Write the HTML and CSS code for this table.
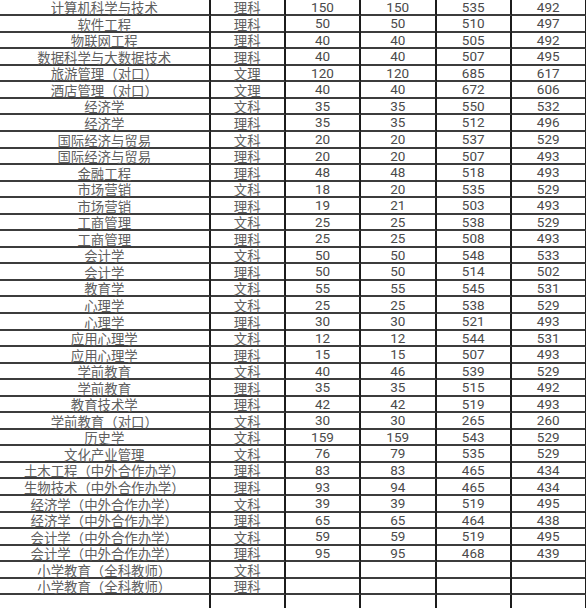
FILE: index.html
```html
<!DOCTYPE html>
<html lang="zh">
<head>
<meta charset="utf-8">
<link rel="stylesheet" href="styles.css">
</head>
<body>
<div class="sheet">
<div class="row"><span class="name">计算机科学与技术</span><span class="type">理科</span><span>150</span><span>150</span><span>535</span><span>492</span></div>
<div class="row"><span class="name">软件工程</span><span class="type">理科</span><span>50</span><span>50</span><span>510</span><span>497</span></div>
<div class="row"><span class="name">物联网工程</span><span class="type">理科</span><span>40</span><span>40</span><span>505</span><span>492</span></div>
<div class="row"><span class="name">数据科学与大数据技术</span><span class="type">理科</span><span>40</span><span>40</span><span>507</span><span>495</span></div>
<div class="row"><span class="name">旅游管理（对口）</span><span class="type">文理</span><span>120</span><span>120</span><span>685</span><span>617</span></div>
<div class="row"><span class="name">酒店管理（对口）</span><span class="type">文理</span><span>40</span><span>40</span><span>672</span><span>606</span></div>
<div class="row"><span class="name">经济学</span><span class="type">文科</span><span>35</span><span>35</span><span>550</span><span>532</span></div>
<div class="row"><span class="name">经济学</span><span class="type">理科</span><span>35</span><span>35</span><span>512</span><span>496</span></div>
<div class="row"><span class="name">国际经济与贸易</span><span class="type">文科</span><span>20</span><span>20</span><span>537</span><span>529</span></div>
<div class="row"><span class="name">国际经济与贸易</span><span class="type">理科</span><span>20</span><span>20</span><span>507</span><span>493</span></div>
<div class="row"><span class="name">金融工程</span><span class="type">理科</span><span>48</span><span>48</span><span>518</span><span>493</span></div>
<div class="row"><span class="name">市场营销</span><span class="type">文科</span><span>18</span><span>20</span><span>535</span><span>529</span></div>
<div class="row"><span class="name">市场营销</span><span class="type">理科</span><span>19</span><span>21</span><span>503</span><span>493</span></div>
<div class="row"><span class="name">工商管理</span><span class="type">文科</span><span>25</span><span>25</span><span>538</span><span>529</span></div>
<div class="row"><span class="name">工商管理</span><span class="type">理科</span><span>25</span><span>25</span><span>508</span><span>493</span></div>
<div class="row"><span class="name">会计学</span><span class="type">文科</span><span>50</span><span>50</span><span>548</span><span>533</span></div>
<div class="row"><span class="name">会计学</span><span class="type">理科</span><span>50</span><span>50</span><span>514</span><span>502</span></div>
<div class="row"><span class="name">教育学</span><span class="type">文科</span><span>55</span><span>55</span><span>545</span><span>531</span></div>
<div class="row"><span class="name">心理学</span><span class="type">文科</span><span>25</span><span>25</span><span>538</span><span>529</span></div>
<div class="row"><span class="name">心理学</span><span class="type">理科</span><span>30</span><span>30</span><span>521</span><span>493</span></div>
<div class="row"><span class="name">应用心理学</span><span class="type">文科</span><span>12</span><span>12</span><span>544</span><span>531</span></div>
<div class="row"><span class="name">应用心理学</span><span class="type">理科</span><span>15</span><span>15</span><span>507</span><span>493</span></div>
<div class="row"><span class="name">学前教育</span><span class="type">文科</span><span>40</span><span>46</span><span>539</span><span>529</span></div>
<div class="row"><span class="name">学前教育</span><span class="type">理科</span><span>35</span><span>35</span><span>515</span><span>492</span></div>
<div class="row"><span class="name">教育技术学</span><span class="type">理科</span><span>42</span><span>42</span><span>519</span><span>493</span></div>
<div class="row"><span class="name">学前教育（对口）</span><span class="type">文科</span><span>30</span><span>30</span><span>265</span><span>260</span></div>
<div class="row"><span class="name">历史学</span><span class="type">文科</span><span>159</span><span>159</span><span>543</span><span>529</span></div>
<div class="row"><span class="name">文化产业管理</span><span class="type">文科</span><span>76</span><span>79</span><span>535</span><span>529</span></div>
<div class="row"><span class="name">土木工程（中外合作办学）</span><span class="type">理科</span><span>83</span><span>83</span><span>465</span><span>434</span></div>
<div class="row"><span class="name">生物技术（中外合作办学）</span><span class="type">理科</span><span>93</span><span>94</span><span>465</span><span>434</span></div>
<div class="row"><span class="name">经济学（中外合作办学）</span><span class="type">文科</span><span>39</span><span>39</span><span>519</span><span>495</span></div>
<div class="row"><span class="name">经济学（中外合作办学）</span><span class="type">理科</span><span>65</span><span>65</span><span>464</span><span>438</span></div>
<div class="row"><span class="name">会计学（中外合作办学）</span><span class="type">文科</span><span>59</span><span>59</span><span>519</span><span>495</span></div>
<div class="row"><span class="name">会计学（中外合作办学）</span><span class="type">理科</span><span>95</span><span>95</span><span>468</span><span>439</span></div>
<div class="row"><span class="name">小学教育（全科教师）</span><span class="type">文科</span><span></span><span></span><span></span><span></span></div>
<div class="row"><span class="name">小学教育（全科教师）</span><span class="type">理科</span><span></span><span></span><span></span><span></span></div>
<div class="row"><span class="name"></span><span class="type"></span><span></span><span></span><span></span><span></span></div>
</div>
</body>
</html>
```
FILE: styles.css
```css
html, body {
  margin: 0;
  padding: 0;
  background: #ffffff;
  overflow: hidden;
}

body {
  width: 586px;
  height: 608px;
  font-family: Roboto, "Noto Sans CJK SC", sans-serif;
}

.sheet {
  margin-top: -0.85px;
  width: 586.5px;
}

.row {
  display: grid;
  grid-template-columns: 210.5px 75.5px 75px 75.5px 75.5px 74.5px;
  height: 16.55px;
}

.row > span {
  box-sizing: border-box;
  display: flex;
  align-items: center;
  justify-content: center;
  border-bottom: 2px solid #3c3c3c;
  border-right: 2px solid #1c1c1c;
  font-size: 13.5px;
  line-height: 13px;
  color: #4a4a4a;
  padding-top: 1px;
  white-space: nowrap;
}

.row > .name,
.row > .type {
  color: #5e5e5e;
  font-family: "Noto Sans CJK SC", sans-serif;
  font-size: 13.4px;
  line-height: 13px;
  padding-top: 2px;
}
```
